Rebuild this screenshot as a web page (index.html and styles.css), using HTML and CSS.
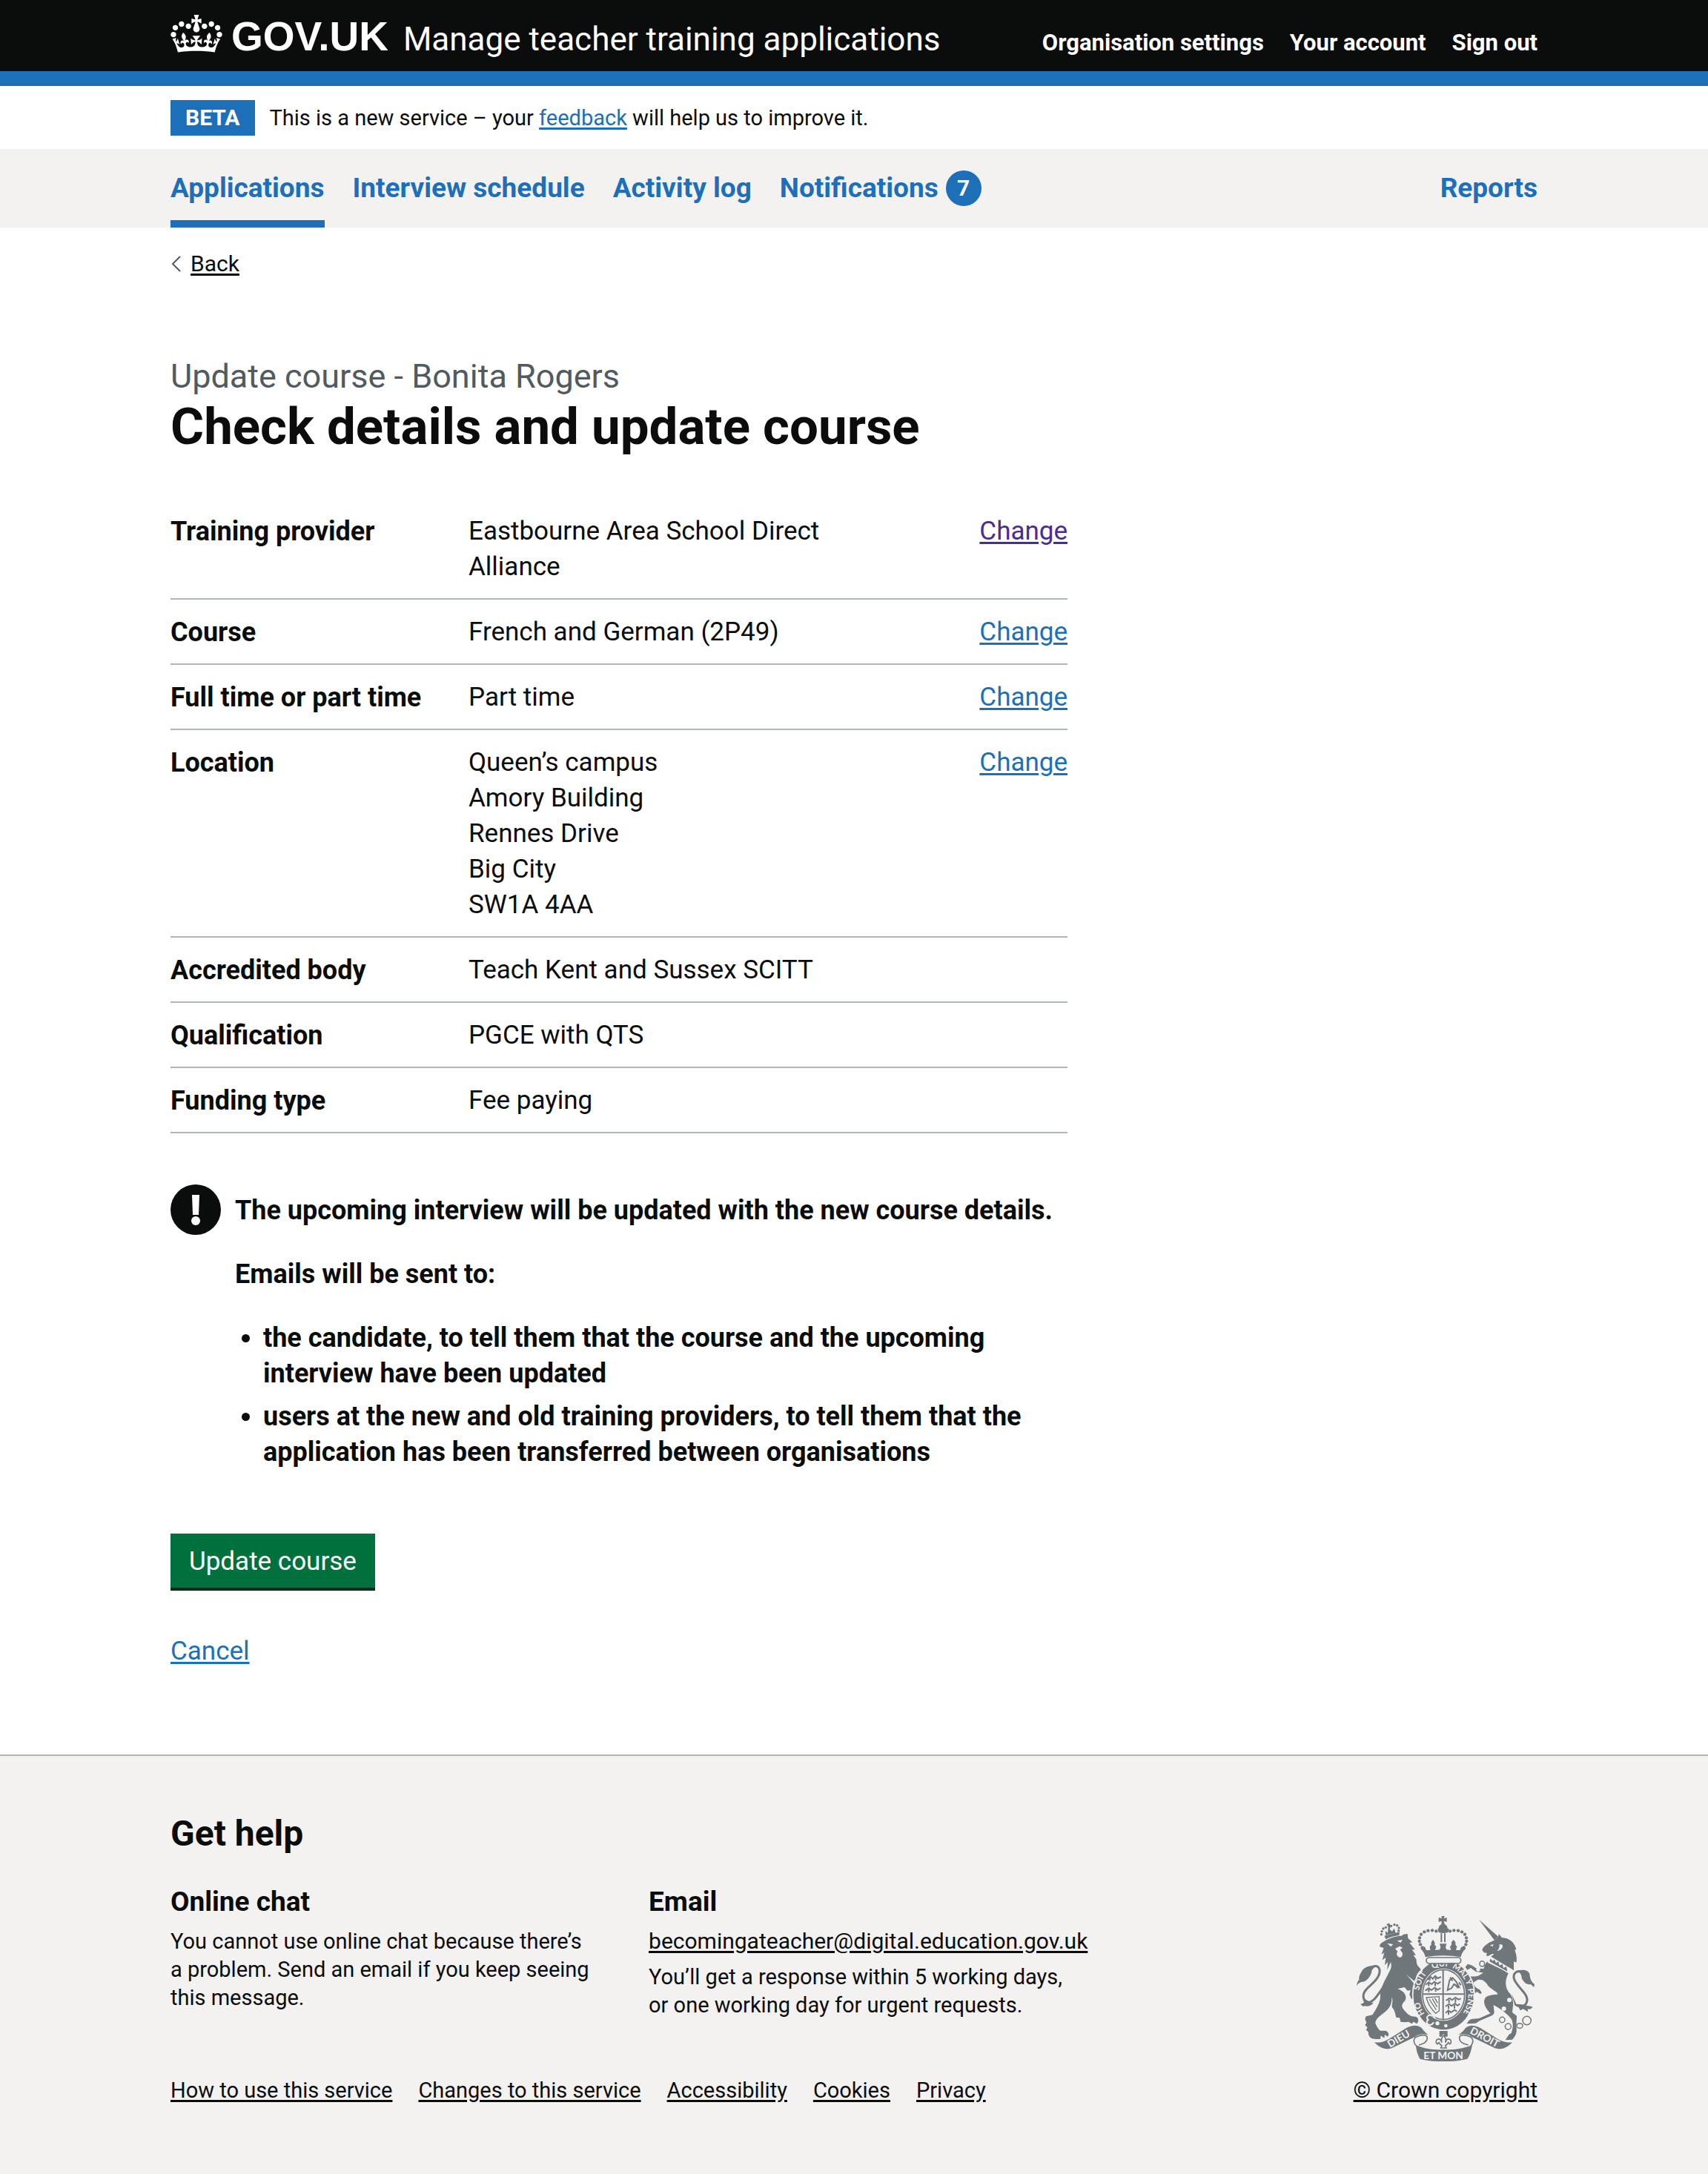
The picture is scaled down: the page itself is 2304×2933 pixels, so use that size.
FILE: index.html
```
<!DOCTYPE html>
<html lang="en">
<head>
  <meta charset="utf-8">
  <meta name="viewport" content="width=device-width, initial-scale=1">
  <title>Check details and update course - Manage teacher training applications - GOV.UK</title>
  <link rel="stylesheet" href="styles.css">
</head>
<body>
  <header class="header">
    <div class="container header-inner">
      <a class="logo" href="#"><svg class="logo-crown" viewBox="0 0 132 97" aria-hidden="true" focusable="false"><path fill="currentColor" fill-rule="evenodd" d="M25 30.2c3.5 1.5 7.7-.2 9.1-3.7 1.5-3.6-.2-7.8-3.9-9.2-3.6-1.4-7.6.3-9.1 3.9-1.4 3.5.3 7.5 3.9 9zM9 39.5c3.6 1.5 7.8-.2 9.2-3.7 1.5-3.6-.2-7.8-3.9-9.1-3.6-1.5-7.6.2-9.1 3.8-1.4 3.5.3 7.5 3.8 9zM4.4 57.2c3.5 1.5 7.7-.2 9.1-3.8 1.5-3.6-.2-7.7-3.9-9.1-3.5-1.5-7.6.3-9.1 3.8-1.4 3.5.3 7.6 3.9 9.1zm38.3-21.4c3.5 1.5 7.7-.2 9.1-3.8 1.5-3.6-.2-7.7-3.9-9.1-3.6-1.5-7.6.3-9.1 3.8-1.3 3.6.4 7.7 3.9 9.1zm64.4-5.6c-3.6 1.5-7.8-.2-9.1-3.7-1.5-3.6.2-7.8 3.8-9.2 3.6-1.4 7.7.3 9.2 3.9 1.3 3.5-.4 7.5-3.9 9zm15.9 9.3c-3.6 1.5-7.7-.2-9.1-3.7-1.5-3.6.2-7.8 3.7-9.1 3.6-1.5 7.7.2 9.2 3.8 1.5 3.5-.3 7.5-3.8 9zm4.7 17.7c-3.6 1.5-7.8-.2-9.2-3.8-1.5-3.6.2-7.7 3.9-9.1 3.6-1.5 7.7.3 9.2 3.8 1.3 3.5-.4 7.6-3.9 9.1zM89.3 35.8c-3.6 1.5-7.8-.2-9.2-3.8-1.4-3.6.2-7.7 3.9-9.1 3.6-1.5 7.7.3 9.2 3.8 1.4 3.6-.3 7.7-3.9 9.1zM69.7 17.7l8.9 4.7V9.3l-8.9 2.8c-.2-.3-.5-.6-.9-.9L72.4 0H59.6l3.5 11.2c-.3.3-.6.5-.9.9l-8.8-2.8v13.1l8.8-4.7c.3.3.6.7.9.9l-5 15.4v.1c-.2.8-.4 1.6-.4 2.4 0 4.1 3.1 7.5 7 8.1h.2c.3 0 .7.1 1 .1.4 0 .7 0 1-.1h.2c4-.6 7.1-4.1 7.1-8.1 0-.8-.1-1.7-.4-2.4V34l-5.1-15.4c.4-.2.7-.6 1-.9zM66 92.8c16.9 0 32.8 1.1 47.1 3.2 4-16.9 8.9-26.7 14-33.5l-9.6-3.4c1 4.9 1.1 7.2 0 10.2-1.5-1.4-3-4.3-4.2-8.7L108.6 76c2.8-2 5-3.2 7.5-3.3-4.4 9.4-10 11.9-13.6 11.2-4.3-.8-6.3-4.6-5.6-7.9 1-4.7 5.7-5.9 8-.5 4.3-8.7-3-11.4-7.6-8.8 7.1-7.2 7.9-13.5 2.1-21.1-8 6.1-8.1 12.3-4.5 20.8-4.7-5.4-12.1-2.5-9.5 6.2 3.4-5.2 7.9-2 7.2 3.1-.6 4.3-6.4 7.8-13.5 7.2-10.3-.9-10.9-8-11.2-13.8 2.5-.5 7.1 1.8 11 7.3L80.2 60c-4.1 4.4-8 5.3-12.3 5.4 1.4-4.4 8-11.6 8-11.6H55.5s6.4 7.2 7.9 11.6c-4.2-.1-8-1-12.3-5.4l1.4 16.4c3.9-5.5 8.5-7.7 10.9-7.3-.3 5.8-.9 12.8-11.1 13.8-7.2.6-12.9-2.9-13.5-7.2-.7-5 3.8-8.3 7.1-3.1 2.7-8.7-4.6-11.6-9.4-6.2 3.7-8.5 3.6-14.7-4.6-20.8-5.8 7.6-5 13.9 2.2 21.1-4.7-2.6-11.9.1-7.7 8.8 2.3-5.5 7.1-4.2 8.1.5.7 3.3-1.3 7.1-5.7 7.9-3.5.7-9-1.8-13.5-11.2 2.5.1 4.7 1.3 7.5 3.3l-4.7-15.4c-1.2 4.4-2.7 7.2-4.3 8.7-1.1-3-.9-5.3 0-10.2l-9.5 3.4c5 6.9 9.9 16.7 14 33.5 14.8-2.1 30.8-3.2 47.7-3.2z"/></svg><span class="logo-text">GOV.UK</span></a>
      <a class="service-name" href="#">Manage teacher training applications</a>
      <nav class="account-nav" aria-label="Account">
        <a href="#">Organisation settings</a>
        <a href="#">Your account</a>
        <a href="#">Sign out</a>
      </nav>
    </div>
  </header>

  <div class="container phase-banner">
    <strong class="tag">BETA</strong>
    <span>This is a new service – your <a class="link" href="#">feedback</a> will help us to improve it.</span>
  </div>

  <nav class="primary-nav" aria-label="Primary">
    <ul class="container primary-nav-list">
      <li><a class="current" href="#" aria-current="page">Applications</a></li>
      <li><a href="#">Interview schedule</a></li>
      <li><a href="#">Activity log</a></li>
      <li><a href="#">Notifications <span class="badge">7</span></a></li>
      <li class="push-right"><a href="#">Reports</a></li>
    </ul>
  </nav>

  <div class="container">
    <div class="back">
      <svg class="back-arrow" viewBox="0 0 14 22" aria-hidden="true"><path d="M13 1 3 11l10 10" fill="none" stroke="#505a5f" stroke-width="2"/></svg>
      <a class="link-text" href="#">Back</a>
    </div>

    <main class="main">
      <span class="caption">Update course - Bonita Rogers</span>
      <h1 class="heading">Check details and update course</h1>

      <dl class="summary">
        <div class="summary-row"><dt>Training provider</dt><dd>Eastbourne Area School Direct Alliance</dd><dd class="action"><a class="link visited" href="#">Change</a></dd></div>
        <div class="summary-row"><dt>Course</dt><dd>French and German (2P49)</dd><dd class="action"><a class="link" href="#">Change</a></dd></div>
        <div class="summary-row"><dt>Full time or part time</dt><dd>Part time</dd><dd class="action"><a class="link" href="#">Change</a></dd></div>
        <div class="summary-row"><dt>Location</dt><dd>Queen’s campus<br>Amory Building<br>Rennes Drive<br>Big City<br>SW1A 4AA</dd><dd class="action"><a class="link" href="#">Change</a></dd></div>
        <div class="summary-row"><dt>Accredited body</dt><dd>Teach Kent and Sussex SCITT</dd></div>
        <div class="summary-row"><dt>Qualification</dt><dd>PGCE with QTS</dd></div>
        <div class="summary-row"><dt>Funding type</dt><dd>Fee paying</dd></div>
      </dl>

      <div class="warning">
        <svg class="warning-icon" viewBox="0 0 68 68" aria-hidden="true"><circle cx="34" cy="34" r="34" fill="#0b0c0c"/><path d="M29 14h10l-1 27h-8z" fill="#fff"/><circle cx="34" cy="49" r="6" fill="#fff"/></svg>
        <div class="warning-text">
          <p>The upcoming interview will be updated with the new course details.</p>
          <p>Emails will be sent to:</p>
          <ul>
            <li>the candidate, to tell them that the course and the upcoming interview have been updated</li>
            <li>users at the new and old training providers, to tell them that the application has been transferred between organisations</li>
          </ul>
        </div>
      </div>

      <form action="#">
        <button class="button" type="submit">Update course</button>
      </form>
      <p class="cancel"><a class="link" href="#">Cancel</a></p>
    </main>
  </div>

  <footer class="footer">
    <div class="container footer-inner">
      <div class="footer-main">
        <h2 class="footer-heading">Get help</h2>
        <div class="help">
          <section class="help-chat">
            <h3>Online chat</h3>
            <p>You cannot use online chat because there’s a problem. Send an email if you keep seeing this message.</p>
          </section>
          <section class="help-email">
            <h3>Email</h3>
            <p><a class="link-text" href="mailto:becomingateacher@digital.education.gov.uk">becomingateacher@digital.education.gov.uk</a></p>
            <p>You’ll get a response within 5 working days, or one working day for urgent requests.</p>
          </section>
        </div>
        <nav class="footer-links" aria-label="Support links">
          <a class="link-text" href="#">How to use this service</a>
          <a class="link-text" href="#">Changes to this service</a>
          <a class="link-text" href="#">Accessibility</a>
          <a class="link-text" href="#">Cookies</a>
          <a class="link-text" href="#">Privacy</a>
        </nav>
      </div>
      <div class="copyright">
        <svg class="crest" viewBox="144 72 720 588" aria-hidden="true">
          <!-- lion: tail, crown, body -->
          <g class="ink">
            <path class="line" stroke-width="9" d="M262 345C235 385 210 425 190 420C165 412 165 385 190 362C220 335 240 315 237 290C233 270 212 272 200 282"/>
            <path d="M222 274C200 270 176 278 167 292C158 306 152 318 154 330C148 336 145 344 144 354C152 342 160 338 170 338C188 334 204 312 206 290Z"/>
            <path d="M170 402C174 415 184 420 196 420L212 424C204 434 192 440 178 436C170 440 164 434 160 426C168 428 172 424 174 420C170 414 168 408 170 402Z"/>
            <path d="M256 152 318 136 316 150C296 152 276 158 262 166Z"/>
            <circle cx="246" cy="134" r="5"/><circle cx="244" cy="146" r="5"/><circle cx="252" cy="123" r="5"/><circle cx="262" cy="118" r="5"/><circle cx="284" cy="112" r="5"/><circle cx="297" cy="107" r="5"/><circle cx="308" cy="110" r="5"/><circle cx="315" cy="120" r="5"/><circle cx="314" cy="131" r="5"/>
            <path d="M265 104 276 101 282 112 278 126 288 134 296 122 302 140 262 150 260 132 270 140 272 116Z"/>
            <path d="M262 170C280 160 304 152 326 152L334 146 350 144 352 162 370 178 358 180 380 208 368 208 384 230 374 230 386 248C386 262 388 272 400 282L404 290C390 300 382 318 382 340C392 350 402 362 402 374L412 392 404 412 394 400 388 414 378 404 366 408 358 390 362 372 350 374 338 360 310 366C338 376 350 398 340 414C332 424 324 430 330 444C342 462 356 474 368 478L386 480C396 488 396 498 388 508L374 500 368 508 354 500 340 502 322 500 318 484 304 482C300 466 298 454 288 442C284 430 294 416 286 400C288 430 276 448 252 466C232 480 220 492 220 506C226 520 232 530 240 536L262 536C274 542 276 550 270 560L258 552 256 566 242 556 240 570 222 570 206 568C196 562 190 552 192 542L182 532 188 524 178 512 184 504 178 488 182 478 208 472C224 448 240 420 240 398C238 372 252 344 264 322L282 286C286 276 284 266 282 258L268 290 270 258 258 270 262 240 248 250 256 220 244 228 254 202 238 196C236 186 244 180 262 170Z"/>
          </g>
          <g class="paper">
            <path d="M268 182 292 186 282 196Z"/><path d="M308 172 330 168 322 180Z"/><path d="M300 204 318 194 330 200 320 208 330 222C330 238 322 242 314 238C306 232 304 224 310 216Z"/>
            <path d="M344 308 386 342 404 384 398 386C388 358 368 332 344 308Z"/>
          </g>
          <!-- unicorn: horn, head, body, tail, chain -->
          <g class="ink">
            <path d="M639 86 718 156 702 170Z"/>
            <path d="M701 170 716 158 720 144 732 160C760 160 782 176 790 206L784 210C790 224 794 244 790 260L780 256 780 292 768 284 684 240 700 226C694 222 686 228 676 234L668 232 672 222 660 220 652 210C654 198 672 184 684 178Z"/>
            <path d="M680 250C704 270 732 288 758 304C744 334 744 358 760 380C776 396 780 418 776 444L774 462 792 476 790 520C794 540 790 556 774 572L746 574 760 552 770 546C776 530 780 506 770 488C748 462 724 446 698 432L700 454C704 464 696 474 688 476L642 496 626 506 590 508C596 494 604 488 616 488L640 486 686 466C664 444 654 420 664 404C676 390 700 392 716 388C710 376 690 370 676 354C666 336 652 326 634 330L618 340C614 352 628 364 642 370L650 382 646 388 630 378 626 384 612 376 604 358 590 332 586 318C600 312 620 322 640 312L656 302C646 298 630 302 622 294L606 282 592 290 584 278 594 266 612 272 626 282 658 286C662 270 668 258 680 250Z"/>
            <path class="line" stroke-width="9" d="M792 434C834 446 842 412 826 388C808 364 784 344 780 322C778 304 790 294 806 296"/>
            <path d="M796 294C816 286 838 290 844 306C846 326 850 338 864 348L862 360 848 348C834 352 818 340 812 322C812 310 806 302 796 294Z"/>
            <path d="M772 388 790 428 812 430C832 436 848 436 856 440C850 450 842 450 836 448L838 460 818 448 806 454 800 440 784 434Z"/>
          </g>
          <path class="paper" d="M722 186 734 188C738 200 728 210 712 214C722 204 722 196 722 186ZM684 190l14-4-4 10z"/>
          <g class="paper"><path d="M676 238 688 236 770 286 764 304 674 260Z"/><circle cx="740" cy="447" r="9"/><circle cx="762" cy="412" r="9"/><circle cx="636" cy="288" r="8"/></g>
          <path class="ink" d="M682 256 686 244 694 254 702 248 708 262 718 256 722 272 734 266 738 282 750 276 754 296Z"/>
          <g class="line" stroke-width="4.500">
            <ellipse cx="652" cy="265" rx="10" ry="11"/><circle cx="733" cy="492" r="11"/><circle cx="757" cy="519" r="12"/><ellipse cx="804" cy="516" rx="12" ry="10"/><circle cx="833" cy="495" r="17"/>
          </g>
          <g fill="none" stroke="#f3f2f1" stroke-width="4"><ellipse cx="642" cy="346" rx="10" ry="13"/><circle cx="770" cy="370" r="12"/></g>
          <!-- garter -->
          <ellipse class="ink" cx="496" cy="391" rx="125" ry="143" stroke="#f3f2f1" stroke-width="5"/>
          <ellipse class="paper" cx="496" cy="390" rx="90" ry="106"/>
          <ellipse class="line" stroke-width="5" cx="496" cy="390" rx="85" ry="101"/>
          <path class="line" stroke-width="6" d="M494 290V490M411 388H581"/>
          <g class="line" stroke-width="6">
            <path d="M430 330l14-12 8 8 10-12 10 10 14-6M424 350l12-10 12 8 10-10 14 8 12-8M422 374l14-10 10 8 14-10 12 8 12-6M440 322v12M464 318v14M436 344v12M462 342v14M436 368v12M464 366v12"/>
            <path d="M506 414l14-10 10 8 14-10 12 8 10-4M504 438l14-10 10 8 14-10 10 8 10-6M504 464l12-10 10 8 14-10 10 6M518 410v14M544 408v14M516 434v14M540 432v14M516 458v14"/>
            <path d="M512 372l8-40 12-10 14 14 12 22-20-10-10 16-16 8zM540 348l16 16M522 320l10 14M558 340l8 12"/>
            <path d="M426 402l52-4v58l-14 10q-30-30-38-64zM438 408l28 44M450 406l20 34M460 404l12 20" stroke-width="4"/>
          </g>
          <path id="garter-line" fill="none" d="M421 468A100 116 0 1 1 571 468"/>
          <g class="motto" font-size="33">
            <text><textPath href="#garter-line" startOffset="2">HO</textPath></text>
            <text><textPath href="#garter-line" startOffset="100">SOIT</textPath></text>
            <text><textPath href="#garter-line" startOffset="206">QUI</textPath></text>
            <text><textPath href="#garter-line" startOffset="286">MAL</textPath></text>
            <text><textPath href="#garter-line" startOffset="362">Y</textPath></text>
            <text><textPath href="#garter-line" startOffset="396">PENSE</textPath></text>
          </g>
          <circle class="paper" cx="471" cy="506" r="8"/><circle class="paper" cx="505" cy="516" r="7"/>
          <path d="M432 476q22-10 30 10M430 508q14 12 26-6M432 476q-8 14 4 16-12 4-6 16" fill="none" stroke="#f3f2f1" stroke-width="6"/>
          <!-- royal crown -->
          <path class="paper" d="M420 232H570V262H420Z"/>
          <rect class="line" stroke-width="5" x="426" y="240" width="140" height="24" rx="12"/>
          <g class="ink">
            <path d="M488 72h12l-3 10 12-4v18l-12-4 3 12-1 6h-12l1-18-12 4V78l12 4z"/>
            <path d="M476 122q0-14 14-18h8q14 4 14 18l6 2-4 14q-20 6-38 0l-4-14z"/>
            <path d="M484 142h6v36h-6zM498 142h6v36h-6z"/>
            <circle cx="466" cy="133" r="6.500"/><circle cx="450" cy="130" r="6.500"/><circle cx="433" cy="131" r="6.500"/><circle cx="418" cy="136" r="6.500"/><circle cx="405" cy="146" r="6.500"/><circle cx="399" cy="160" r="6.500"/><circle cx="398" cy="174" r="6.500"/><circle cx="402" cy="187" r="6.500"/><circle cx="410" cy="199" r="6.500"/>
            <circle cx="522" cy="133" r="6.500"/><circle cx="538" cy="130" r="6.500"/><circle cx="555" cy="131" r="6.500"/><circle cx="570" cy="136" r="6.500"/><circle cx="582" cy="146" r="6.500"/><circle cx="588" cy="160" r="6.500"/><circle cx="589" cy="174" r="6.500"/><circle cx="586" cy="187" r="6.500"/><circle cx="578" cy="199" r="6.500"/>
            <path d="M402 204 420 196 426 210 442 210 440 196 446 188 446 178 453 168 460 178 460 188 466 196 462 210 480 208 484 198 480 184H508L504 198 508 208 526 210 522 196 528 188 528 178 536 168 544 178 544 188 550 196 546 210 562 210 568 196 586 204C574 214 568 226 566 238Q494 226 422 238C420 226 414 214 402 204Z"/>
          </g>
          <!-- fleur-de-lis and ribbon -->
          <path class="ink" d="M479 537H512V560H502L495 548 488 560H479Z"/>
          <path class="line" stroke-width="5" d="M495 556q-12 16-6 28-6-20-20-12-8 12 2 18l6-6q4 8 12 12l-4 10h22l-4-10q8-4 12-12l6 6q10-6 2-18-14-8-20 12 6-12-6-28z"/>
          <g class="ink">
            <path d="M216 583C242 586 262 578 280 566L344 526C368 512 394 512 408 526C416 538 424 546 434 552C412 548 396 550 382 560L292 604C262 618 238 606 216 583Z"/>
            <path d="M774 583C748 586 728 578 710 566L646 526C622 512 598 512 584 526C576 538 568 546 556 552C578 548 594 550 608 560L698 604C728 618 752 606 774 583Z"/>
            <path d="M384 594C420 610 456 614 495 613C534 614 570 610 612 594C606 624 600 640 592 650C540 664 450 664 400 650C394 636 386 624 384 594Z"/>
          </g>
          <path class="line" stroke-width="5" d="M388 600C370 582 374 566 388 560C410 550 430 552 430 566C430 582 412 590 396 594M604 600C620 582 616 566 602 560C580 550 560 552 560 566C560 582 578 590 596 594"/>
          <g class="motto" font-size="41">
            <text transform="translate(279 605) rotate(-30)">DIEU</text>
            <text x="495" y="652" text-anchor="middle">ET MON</text>
            <text transform="translate(600 545) rotate(28)">DROIT</text>
          </g>
        </svg>
        <a class="link-text" href="#">© Crown copyright</a>
      </div>
    </div>
  </footer>
</body>
</html>
```
FILE: styles.css
```
* {
  box-sizing: border-box;
}

body {
  margin: 0;
  font-family: Roboto, "Liberation Sans", sans-serif;
  font-size: 35px;
  line-height: 48px;
  color: #0b0c0c;
  background: #fff;
}

h1, h2, h3, p, ul, dl, dd {
  margin: 0;
}

ul {
  padding: 0;
  list-style: none;
}

.container {
  width: calc(100% - 120px);
  max-width: 1844px;
  margin: 0 auto;
}

.link,
.link-text {
  color: #1d70b8;
  text-decoration: underline;
  text-decoration-thickness: 3px;
  text-underline-offset: 3px;
}

.link-text {
  color: #0b0c0c;
}

.visited {
  color: #4c2c92;
}

/* Header */
.header {
  background: #0b0c0c;
  border-bottom: 20px solid #1d70b8;
}

.header-inner {
  display: flex;
  align-items: baseline;
  padding: 19px 0 8px;
  line-height: 60px;
}

.header a {
  color: #fff;
  text-decoration: none;
}

.logo {
  margin-right: 20px;
  font: bold 55px/60px "Liberation Sans", Arial, sans-serif;
}

.logo-crown {
  width: 70px;
  height: 51px;
  margin-right: 12px;
  vertical-align: -3px;
}

.service-name {
  font-size: 44px;
}

.account-nav {
  display: flex;
  gap: 35px;
  margin-left: auto;
  font-size: 31px;
  font-weight: bold;
}

/* Phase banner */
.phase-banner {
  display: flex;
  gap: 20px;
  padding: 19px 0 18px;
  font-size: 29px;
}

.tag {
  padding: 0 20px;
  font-size: 30px;
  color: #fff;
  background: #1d70b8;
}

/* Primary navigation */
.primary-nav {
  background: #f3f2f1;
  font-size: 37px;
  font-weight: bold;
}

.primary-nav-list {
  display: flex;
  gap: 38px;
}

.primary-nav a {
  display: flex;
  gap: 10px;
  padding: 29px 0 19px;
  border-bottom: 10px solid transparent;
  color: #1d70b8;
  text-decoration: none;
}

.primary-nav .current {
  border-bottom-color: #1d70b8;
}

.badge {
  width: 48px;
  height: 48px;
  border-radius: 50%;
  font-size: 30px;
  text-align: center;
  color: #fff;
  background: #1d70b8;
}

.push-right {
  margin-left: auto;
}

/* Page content */
.back {
  display: flex;
  align-items: center;
  gap: 13px;
  padding-top: 30px;
  font-size: 30px;
  line-height: 38px;
}

.back-arrow {
  width: 14px;
  height: 22px;
}

.main {
  max-width: 1210px;
  padding: 104px 0 115px;
}

.caption {
  display: block;
  font-size: 45px;
  line-height: 58px;
  color: #505a5f;
}

.heading {
  font-size: 69px;
  line-height: 78px;
}

.summary {
  margin: 58px 0 69px;
}

.summary-row {
  display: grid;
  grid-template-columns: 402fr 560fr 248fr;
  padding: 20px 0 18px;
  border-bottom: 2px solid #b1b4b6;
}

.summary dt {
  font-size: 36px;
  font-weight: bold;
}

.action {
  text-align: right;
}

.warning {
  display: flex;
  gap: 19px;
  margin-bottom: 86px;
  font-size: 36px;
  font-weight: bold;
}

.warning-icon {
  flex: none;
  width: 68px;
  height: 68px;
}

.warning-text {
  padding-top: 11px;
}

.warning-text p {
  margin-bottom: 38px;
}

.warning-text ul {
  padding-left: 38px;
  list-style: disc;
}

.warning-text li + li {
  margin-top: 10px;
}

.button {
  display: block;
  padding: 14px 25px 11px;
  border: 0;
  border-bottom: 4px solid #002d18;
  font: inherit;
  color: #fff;
  background: #00703c;
}

.cancel {
  margin-top: 58px;
}

/* Footer */
.footer {
  border-top: 2px solid #b1b4b6;
  background: #f3f2f1;
}

.footer-inner {
  display: flex;
  align-items: flex-end;
  padding: 76px 0 95px;
  font-size: 29px;
  line-height: 38px;
}

.footer-main {
  flex: 1;
}

.footer-heading {
  margin-bottom: 39px;
  font-size: 48px;
  line-height: 58px;
}

.help {
  display: grid;
  grid-template-columns: 644fr 949fr;
}

.help h3 {
  font-size: 37px;
  line-height: 48px;
}

.help p {
  max-width: 580px;
  margin-top: 10px;
}

.help-chat {
  padding-right: 72px;
}

.help-email .link-text,
.copyright {
  font-size: 30px;
}

.footer-links {
  display: flex;
  gap: 35px;
  margin-top: 77px;
}

.copyright {
  display: flex;
  flex-direction: column;
  align-items: center;
  gap: 20px;
}

.crest {
  width: 240px;
  height: 196px;
}

.ink {
  fill: #6f777b;
}

.paper {
  fill: #f3f2f1;
}

.line {
  fill: none;
  stroke: #6f777b;
}

.motto {
  fill: #f3f2f1;
  font-family: Lato, sans-serif;
  font-weight: bold;
}
```
